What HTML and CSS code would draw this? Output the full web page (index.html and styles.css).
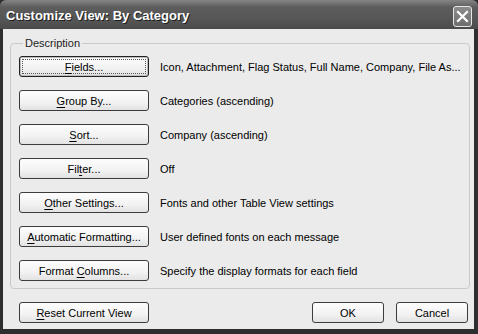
FILE: index.html
```html
<!DOCTYPE html>
<html>
<head>
    <title>Customize View: By Category</title>
    <link rel="stylesheet" href="styles.css">
</head>
<body>
    <div class="window">
        <div class="titlebar">
            <span class="title">Customize View: By Category</span>
            <span class="close">
                <svg width="13" height="13" viewBox="0 0 13 13">
                    <path d="M2 2 L11 11 M11 2 L2 11" stroke="#fff" stroke-width="2.2" stroke-linecap="square"/>
                </svg>
            </span>
        </div>
        <div class="client">
            <fieldset class="group">
                <legend>Description</legend>
                <div class="row">
                    <button class="btn focused"><span class="focus"><u>F</u>ields...</span></button>
                    <span class="desc">Icon, Attachment, Flag Status, Full Name, Company, File As...</span>
                </div>
                <div class="row">
                    <button class="btn"><u>G</u>roup By...</button>
                    <span class="desc">Categories (ascending)</span>
                </div>
                <div class="row">
                    <button class="btn"><u>S</u>ort...</button>
                    <span class="desc">Company (ascending)</span>
                </div>
                <div class="row">
                    <button class="btn">Fil<u>t</u>er...</button>
                    <span class="desc">Off</span>
                </div>
                <div class="row">
                    <button class="btn"><u>O</u>ther Settings...</button>
                    <span class="desc">Fonts and other Table View settings</span>
                </div>
                <div class="row">
                    <button class="btn"><u>A</u>utomatic Formatting...</button>
                    <span class="desc">User defined fonts on each message</span>
                </div>
                <div class="row">
                    <button class="btn">Format <u>C</u>olumns...</button>
                    <span class="desc">Specify the display formats for each field</span>
                </div>
            </fieldset>
            <div class="footer">
                <button class="btn"><u>R</u>eset Current View</button>
                <div class="actions">
                    <button class="btn small">OK</button>
                    <button class="btn small">Cancel</button>
                </div>
            </div>
        </div>
    </div>
</body>
</html>
```

FILE: styles.css
```css
body {
    margin: 0;
    font-family: "Liberation Sans", Arial, sans-serif;
    font-size: 11px;
    color: #000;
}
.window {
    width: 478px;
    height: 334px;
    background: #2e2e2e;
    display: flex;
    flex-direction: column;
    box-sizing: border-box;
    padding: 0 4px 5px 3px;
}
.titlebar {
    height: 29px;
    margin: 0 -4px 0 -3px;
    padding: 0 6px 0 6px;
    display: flex;
    align-items: center;
    background: linear-gradient(#858585, #5c5c5c 25%, #555 70%, #4a4a4a);
    border-radius: 6px 6px 0 0;
}
.title {
    color: #fff;
    font-weight: bold;
    font-size: 13px;
    text-shadow: 1px 1px 0 #1e1e1e;
    margin-top: 1px;
}
.close {
    margin-left: auto;
    margin-top: 3px;
    width: 17px;
    height: 19px;
    border: 1px solid #e6e6e6;
    border-radius: 3px;
    background: linear-gradient(#8c8c8c, #6e6e6e);
    display: flex;
    align-items: center;
    justify-content: center;
}
.client {
    flex: 1;
    background: #ebebeb;
    padding: 8px 6px 0 7px;
    display: flex;
    flex-direction: column;
}
.group {
    margin: 0;
    border: 1px solid #c9c9c9;
    border-radius: 4px;
    padding: 7px 8px 7px 8px;
    display: flex;
    flex-direction: column;
    gap: 13px;
}
.group legend {
    padding: 0 2px;
    margin-left: 4px;
    color: #222;
}
.row {
    display: flex;
    align-items: center;
    gap: 11px;
}
.btn {
    width: 130px;
    height: 21px;
    padding: 0;
    font-family: inherit;
    font-size: 11px;
    color: #000;
    border: 1px solid #3c3c3c;
    border-radius: 3px;
    background: linear-gradient(#fdfdfd, #f2f2f2 60%, #e2e2e2);
}
.btn u {
    text-decoration-thickness: 1px;
    text-underline-offset: 2px;
}
.focused {
    border-color: #222;
    box-shadow: inset 0 0 0 1px #bdbdbd;
    padding: 2px;
}
.focus {
    display: flex;
    align-items: center;
    justify-content: center;
    height: 100%;
    border: 1px dotted #555;
    box-sizing: border-box;
}
.desc {
    white-space: nowrap;
}
.footer {
    display: flex;
    margin-top: 13px;
    padding-left: 9px;
}
.actions {
    margin-left: auto;
    display: flex;
    gap: 12px;
}
.small {
    width: 72px;
}
```
